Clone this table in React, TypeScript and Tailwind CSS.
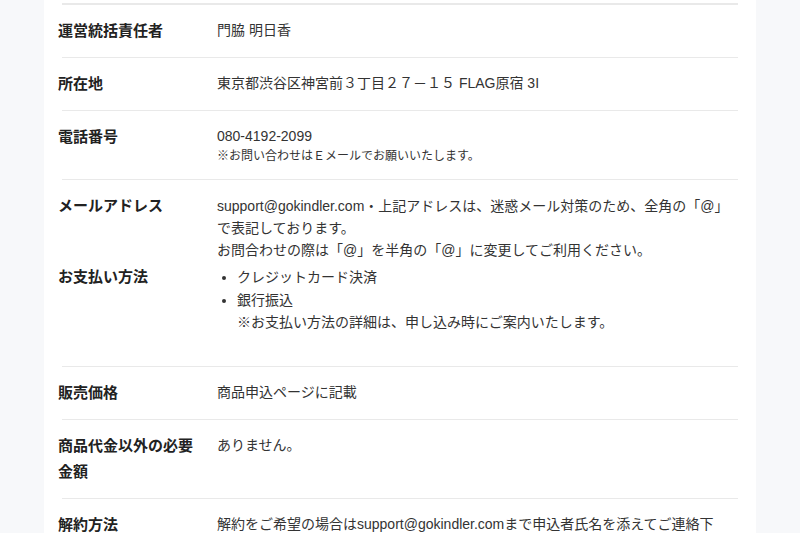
import React from 'react';

const font = { fontFamily: '"Liberation Sans", "Noto Sans CJK JP", sans-serif' };

function Row({ label, children, first = false }: { label: React.ReactNode; children: React.ReactNode; first?: boolean }) {
  return (
    <div className={`mx-[4px] border-[#e9e9e9] ${first ? 'border-t-2' : 'border-t'}`}>
      <div className="-mx-[4px] grid grid-cols-[140px_1fr] gap-x-[19px] py-[13px]">
        <div className="text-[15px] leading-[26px] font-bold text-[#222]">{label}</div>
        <div className="pt-[1px] text-[14px] leading-[22px] text-[#333]">{children}</div>
      </div>
    </div>
  );
}

export default function App() {
  return (
    <div className="min-h-screen bg-[#f7f8fa]" style={font}>
      <div className="mx-[44px] h-[533px] overflow-hidden bg-white px-[14px] pt-[3px]">
        <Row label="運営統括責任者" first>
          門脇 明日香
        </Row>
        <Row label="所在地">東京都渋谷区神宮前３丁目２７－１５ FLAG原宿 3I</Row>
        <Row label="電話番号">
          <p>080-4192-2099</p>
          <p className="text-[12px] leading-[19px]">※お問い合わせはＥメールでお願いいたします。</p>
        </Row>
        <div className="mx-[4px] border-t border-[#e9e9e9]">
          <div className="-mx-[4px] pt-[13px] pb-[32px]">
            <div className="grid grid-cols-[140px_1fr] gap-x-[19px]">
              <div className="text-[15px] leading-[26px] font-bold text-[#222]">メールアドレス</div>
              <div className="pt-[2px] text-[14px] leading-[22px] text-[#333] whitespace-nowrap">
                support@gokindler.com・上記アドレスは、迷惑メール対策のため、全角の「@」
                <br />
                で表記しております。
                <br />
                お問合わせの際は「@」を半角の「@」に変更してご利用ください。
              </div>
            </div>
            <div className="mt-[3px] grid grid-cols-[140px_1fr] gap-x-[19px]">
              <div className="text-[15px] leading-[26px] font-bold text-[#222]">お支払い方法</div>
              <ul className="list-disc pl-[20px] pt-[2px] text-[14px] leading-[22.5px] text-[#333]">
                <li>クレジットカード決済</li>
                <li>
                  銀行振込
                  <br />
                  ※お支払い方法の詳細は、申し込み時にご案内いたします。
                </li>
              </ul>
            </div>
          </div>
        </div>
        <Row label="販売価格">商品申込ページに記載</Row>
        <Row label="商品代金以外の必要金額">ありません。</Row>
        <Row label="解約方法">
          <span className="whitespace-nowrap">解約をご希望の場合はsupport@gokindler.comまで申込者氏名を添えてご連絡下</span>
        </Row>
      </div>
    </div>
  );
}
